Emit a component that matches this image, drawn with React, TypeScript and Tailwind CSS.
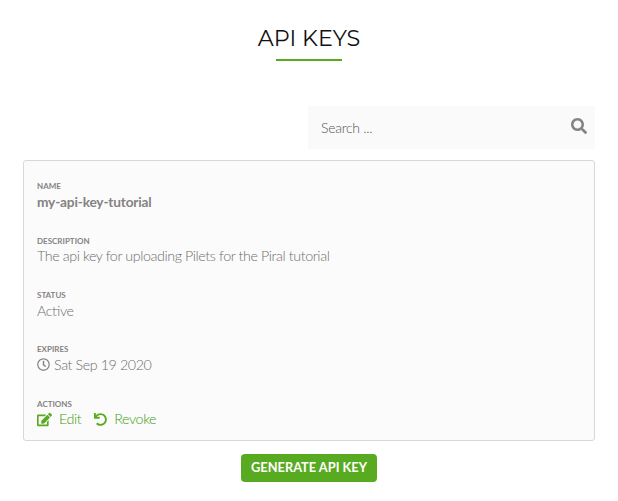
import React from "react";
import { FaSearch, FaRegClock, FaEdit, FaUndo } from "react-icons/fa";

function Field({ label, children }: { label: string; children: React.ReactNode }) {
  return (
    <div className="flex h-[54.3px] flex-col">
      <span className="h-[8.5px] text-[8px] leading-[9px] font-bold uppercase">{label}</span>
      <div className="flex h-[22px] items-center text-[14.3px] leading-[22px] font-light tracking-[-0.41px] whitespace-nowrap text-[#6f6d6d] [font-feature-settings:'liga']">{children}</div>
    </div>
  );
}

export default function App() {
  return (
    <main className="flex h-[501px] w-[618px] flex-col overflow-hidden bg-white pr-[23px] pl-[23px] font-['Lato',sans-serif] text-[#858282]">
      <header className="flex h-[106px] flex-col items-center pt-[23px]">
        <h1 className="font-['Montserrat','Inter',sans-serif] text-[22.3px] leading-[30px] whitespace-nowrap text-[#111]">API KEYS</h1>
        <div className="mt-[6px] h-[2px] w-[66px] bg-[#58ab20]" />
      </header>
      <div className="ml-auto flex h-[43px] w-[287px] items-center justify-between bg-[#fafafa] pr-[8px] pl-[13px]">
        <span className="text-[14px] font-light tracking-[-0.27px] text-[#555]">Search ...</span>
        <FaSearch className="mb-[3px] size-4" />
      </div>
      <section className="mt-[11px] h-[281px] shrink-0 rounded-[3px] border border-[#d8d8d8] bg-[#fbfbfb] pt-[21.45px] pl-[13px]">
        <Field label="Name"><b className="text-[13.7px] font-bold tracking-[-0.18px] text-[#858282]">my-api-key-tutorial</b></Field>
        <Field label="Description">The api key for uploading Pilets for the Piral tutorial</Field>
        <Field label="Status">Active</Field>
        <Field label="Expires"><FaRegClock className="mr-1 size-[13px] text-[#858282]" />Sat Sep 19 2020</Field>
        <Field label="Actions">
          <a className="flex items-center text-[#429a0b]"><FaEdit className="mr-[7px] size-[15px] text-[#58ab20]" />Edit</a>
          <a className="ml-[13px] flex items-center text-[#429a0b]"><FaUndo className="mr-[7px] size-[13px] text-[#58ab20]" />Revoke</a>
        </Field>
      </section>
      <button className="mx-auto mt-[13px] h-[28px] w-[136px] shrink-0 rounded-[4px] bg-[#58ab20] text-[12.8px] font-bold whitespace-nowrap text-white">GENERATE API KEY</button>
    </main>
  );
}
